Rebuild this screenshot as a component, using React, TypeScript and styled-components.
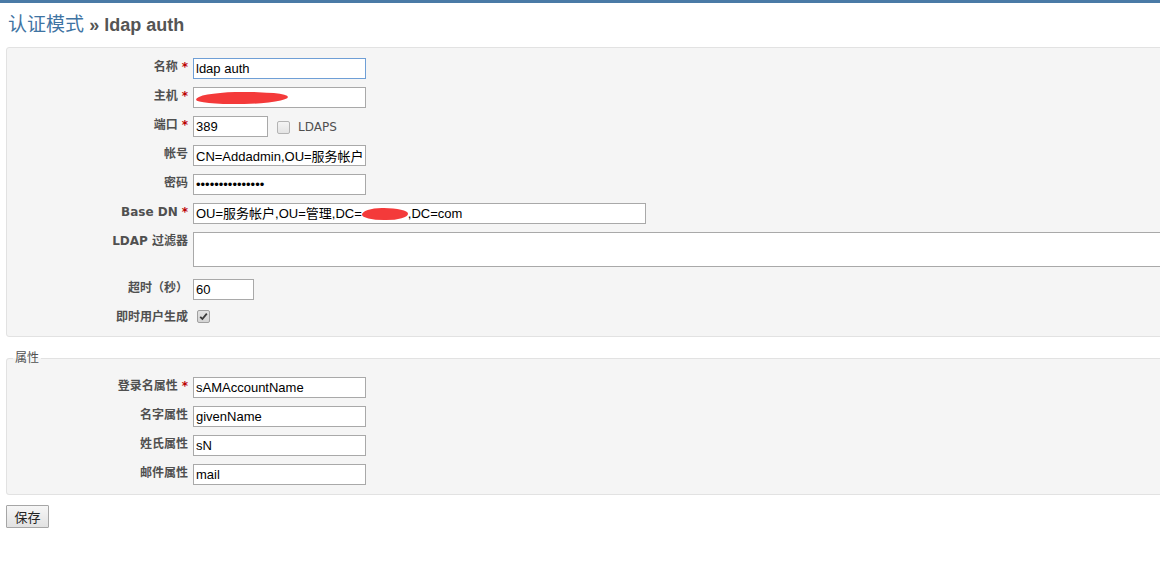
import React from "react";
import styled, { createGlobalStyle } from "styled-components";

const GlobalStyle = createGlobalStyle`
  html, body {
    margin: 0;
    padding: 0;
    background: #ffffff;
    overflow: hidden;
  }
  body {
    font-family: "DejaVu Sans", Verdana, "Noto Sans CJK SC", sans-serif;
    font-size: 12px;
    color: #505050;
  }
`;

const TopBar = styled.div`
  height: 3px;
  background: #4a7aa6;
`;

const Content = styled.div`
  width: 1200px;
  padding: 0 0 0 6px;
`;

const Title = styled.h2`
  margin: 0 0 11px 0;
  padding: 11px 0 0 2px;
  height: 22px;
  line-height: 22px;
  font-family: "Liberation Sans", Arial, "Noto Sans CJK SC", sans-serif;
  font-size: 19px;
  font-weight: bold;
  color: #555555;
  white-space: nowrap;
`;

const TitleLink = styled.a`
  color: #3f74a3;
  font-weight: normal;
  text-decoration: none;
`;

const TitleRest = styled.span`
  font-size: 18px;
`;

const Box = styled.div`
  box-sizing: border-box;
  width: 1190px;
  background: #f5f5f5;
  border: 1px solid #e2e2e2;
  border-radius: 3px;
  padding: 6px;
`;

const Fieldset = styled.fieldset`
  box-sizing: border-box;
  width: 1190px;
  min-width: 0;
  margin: 14px 0 0 0;
  padding: 8px 6px 5px 6px;
  background: #f5f5f5;
  border: 1px solid #e2e2e2;
  border-radius: 3px;
`;

const Legend = styled.legend`
  padding: 0 2px;
  font-size: 12px;
  line-height: 14px;
  color: #505050;
  font-family: "DejaVu Sans", "Noto Sans CJK SC", sans-serif;
`;

const Row = styled.div<{ $bottom?: number }>`
  display: grid;
  grid-template-columns: 175px 1fr;
  column-gap: 5px;
  align-items: start;
  padding: 4px 0 ${(p) => p.$bottom ?? 4}px 0;
`;

const Label = styled.label`
  text-align: right;
  font-weight: bold;
  line-height: 18px;
  color: #505050;
  white-space: nowrap;
`;

const Required = styled.span`
  color: #bb0000;
  margin-left: 4px;
`;

const Field = styled.div`
  display: flex;
  align-items: center;
  min-width: 0;
`;

const TextInput = styled.input<{ $w: number; $focus?: boolean }>`
  box-sizing: border-box;
  width: ${(p) => p.$w}px;
  height: 21px;
  margin: 0;
  padding: 0 2px;
  border: 1px solid ${(p) => (p.$focus ? "#6f9fd6" : "#a9a9a9")};
  background: #ffffff;
  font-family: "Liberation Sans", Arial, "Noto Sans CJK SC", sans-serif;
  font-size: 13px;
  color: #000000;
  outline: none;
`;

const FakeInput = styled.div<{ $w: number }>`
  box-sizing: border-box;
  width: ${(p) => p.$w}px;
  height: 21px;
  padding: 0 2px;
  border: 1px solid #a9a9a9;
  background: #ffffff;
  font-family: "Liberation Sans", Arial, "Noto Sans CJK SC", sans-serif;
  font-size: 13px;
  line-height: 19px;
  color: #000000;
  white-space: nowrap;
  overflow: hidden;
`;

const Redact = styled.span<{ $w: number; $rot?: number }>`
  display: inline-block;
  vertical-align: middle;
  width: ${(p) => p.$w}px;
  height: 12px;
  margin-top: -2px;
  background: #f43a3a;
  border-radius: 45% 55% 50% 50% / 60% 50% 55% 45%;
  transform: rotate(${(p) => p.$rot ?? 0}deg);
`;

const TextArea = styled.textarea`
  box-sizing: border-box;
  width: 1000px;
  height: 35px;
  margin: 0;
  padding: 1px 2px;
  border: 1px solid #a9a9a9;
  background: #ffffff;
  resize: none;
  font-family: "Liberation Sans", Arial, sans-serif;
  font-size: 13px;
  display: block;
`;

const CheckBox = styled.span<{ $checked?: boolean }>`
  box-sizing: border-box;
  display: inline-flex;
  align-items: center;
  justify-content: center;
  width: 13px;
  height: 13px;
  margin: 2px 0 0 ${(p) => (p.$checked ? 4 : 9)}px;
  border: 1px solid ${(p) => (p.$checked ? "#a0a0a0" : "#b4b4b4")};
  border-radius: 2px;
  background: ${(p) =>
    p.$checked
      ? "linear-gradient(#e2e2e2, #d4d4d4)"
      : "linear-gradient(#f4f4f4, #e4e4e4)"};
`;

const CheckLabel = styled.span`
  margin-left: 8px;
  line-height: 18px;
  color: #505050;
`;

const Button = styled.button`
  box-sizing: border-box;
  margin: 10px 0 0 0;
  height: 23px;
  width: 43px;
  padding: 0;
  border: 1px solid #a6a6a6;
  border-radius: 1px;
  background: linear-gradient(#f6f6f6, #e2e2e2);
  font-family: "Noto Sans CJK SC", "DejaVu Sans", sans-serif;
  font-size: 13px;
  color: #222222;
`;

const Check = () => (
  <svg width="9" height="9" viewBox="0 0 9 9">
    <path d="M1.2 4.8 L3.4 7 L7.8 1.6" fill="none" stroke="#3a3a3a" strokeWidth="1.8" />
  </svg>
);

export default function App() {
  return (
    <>
      <GlobalStyle />
      <TopBar />
      <Content>
        <Title>
          <TitleLink href="#">认证模式</TitleLink> <TitleRest>» ldap auth</TitleRest>
        </Title>
        <Box>
          <Row>
            <Label>
              名称<Required>*</Required>
            </Label>
            <Field>
              <TextInput $w={173} $focus defaultValue="ldap auth" />
            </Field>
          </Row>
          <Row>
            <Label>
              主机<Required>*</Required>
            </Label>
            <Field>
              <FakeInput $w={173}>
                <Redact $w={92} $rot={-1} />
              </FakeInput>
            </Field>
          </Row>
          <Row>
            <Label>
              端口<Required>*</Required>
            </Label>
            <Field>
              <TextInput $w={75} defaultValue="389" />
              <CheckBox />
              <CheckLabel>LDAPS</CheckLabel>
            </Field>
          </Row>
          <Row>
            <Label>帐号</Label>
            <Field>
              <TextInput $w={173} defaultValue="CN=Addadmin,OU=服务帐户,OU=管理" />
            </Field>
          </Row>
          <Row>
            <Label>密码</Label>
            <Field>
              <TextInput $w={173} type="password" defaultValue="passwordpasswor" />
            </Field>
          </Row>
          <Row>
            <Label>
              Base DN<Required>*</Required>
            </Label>
            <Field>
              <FakeInput $w={453}>
                OU=服务帐户,OU=管理,DC=<Redact $w={46} />,DC=com
              </FakeInput>
            </Field>
          </Row>
          <Row $bottom={8}>
            <Label>LDAP 过滤器</Label>
            <Field>
              <TextArea />
            </Field>
          </Row>
          <Row>
            <Label>超时（秒）</Label>
            <Field>
              <TextInput $w={61} defaultValue="60" />
            </Field>
          </Row>
          <Row>
            <Label>即时用户生成</Label>
            <Field>
              <CheckBox $checked>
                <Check />
              </CheckBox>
            </Field>
          </Row>
        </Box>
        <Fieldset>
          <Legend>属性</Legend>
          <Row>
            <Label>
              登录名属性<Required>*</Required>
            </Label>
            <Field>
              <TextInput $w={173} defaultValue="sAMAccountName" />
            </Field>
          </Row>
          <Row>
            <Label>名字属性</Label>
            <Field>
              <TextInput $w={173} defaultValue="givenName" />
            </Field>
          </Row>
          <Row>
            <Label>姓氏属性</Label>
            <Field>
              <TextInput $w={173} defaultValue="sN" />
            </Field>
          </Row>
          <Row>
            <Label>邮件属性</Label>
            <Field>
              <TextInput $w={173} defaultValue="mail" />
            </Field>
          </Row>
        </Fieldset>
        <Button>保存</Button>
      </Content>
    </>
  );
}
